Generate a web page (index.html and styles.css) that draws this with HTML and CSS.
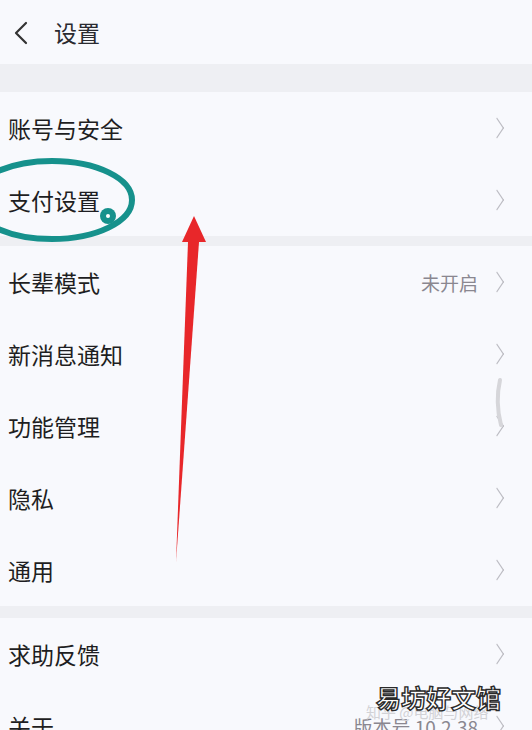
FILE: index.html
```html
<!DOCTYPE html>
<html lang="zh">
<head>
    <meta charset="UTF-8">
    <meta name="viewport" content="width=device-width, initial-scale=1.0">
    <title>设置</title>
    <link rel="stylesheet" href="styles.css">
</head>
<body>
    <div class="tela">
        <header class="topo">
            <svg class="voltar" width="16" height="24" viewBox="0 0 16 24">
                <path d="M13 2 L3 12 L13 22" fill="none" stroke="#333" stroke-width="2.2" stroke-linecap="round" stroke-linejoin="round"/>
            </svg>
            <span class="titulo">设置</span>
        </header>

        <div class="faixa faixa-topo"></div>

        <div class="grupo">
            <div class="linha-item"><span>账号与安全</span><span class="seta"></span></div>
            <div class="linha-item"><span>支付设置</span><span class="seta"></span></div>
        </div>

        <div class="faixa faixa-fina"></div>

        <div class="grupo">
            <div class="linha-item"><span>长辈模式</span><span class="valor">未开启</span><span class="seta"></span></div>
            <div class="linha-item"><span>新消息通知</span><span class="seta"></span></div>
            <div class="linha-item"><span>功能管理</span><span class="seta"></span></div>
            <div class="linha-item"><span>隐私</span><span class="seta"></span></div>
            <div class="linha-item"><span>通用</span><span class="seta"></span></div>
        </div>

        <div class="faixa faixa-media"></div>

        <div class="grupo">
            <div class="linha-item"><span>求助反馈</span><span class="seta"></span></div>
            <div class="linha-item"><span>关于</span><span class="valor">版本号 10.2.38</span><span class="seta"></span></div>
        </div>

        <!-- anotacoes desenhadas por cima da captura -->
        <svg class="anotacao" width="532" height="730" viewBox="0 0 532 730">
            <ellipse cx="52" cy="200" rx="80" ry="39" fill="none" stroke="#16918c" stroke-width="6"/>
            <circle cx="108" cy="216" r="8" fill="#16918c"/>
            <circle cx="108" cy="216" r="2" fill="#ffffff"/>
            <path d="M176 562 L188 242 L199 242 Z" fill="#e8272a"/>
            <path d="M194 216 L182 242 L206 242 Z" fill="#e8272a"/>
            <path d="M500 380 Q495 402 501 425" fill="none" stroke="#d6d6da" stroke-width="4" stroke-linecap="round"/>
        </svg>

        <div class="marca">
            <span class="marca-fundo">知乎 @电脑与网络</span>
            <span class="marca-texto">易坊好文馆</span>
        </div>
    </div>
</body>
</html>
```

FILE: styles.css
```css
body {
    margin: 0;
    background: #f7f8fc;
    font-family: "Noto Sans CJK SC", "Noto Sans", sans-serif;
    color: #1e1e22;
}
.tela {
    width: 532px;
    height: 730px;
    overflow: hidden;
    position: relative;
}
.topo {
    height: 64px;
    display: flex;
    align-items: center;
    padding-left: 13px;
    background: #f8f9fd;
}
.voltar {
    margin-top: 1px;
}
.titulo {
    margin-left: 25px;
    font-size: 23px;
    color: #2a2a30;
}
.faixa {
    background: #eeeff3;
}
.faixa-topo {
    height: 28px;
}
.faixa-fina {
    height: 10px;
}
.faixa-media {
    height: 12px;
}
.grupo {
    background: #f8f9fd;
}
.linha-item {
    height: 72px;
    display: flex;
    align-items: center;
    padding: 0 27px 0 8px;
    font-size: 23px;
}
.linha-item span:first-child {
    flex: 1;
}
.grupo:nth-of-type(1) .linha-item {
    height: 73px;
}
.valor {
    font-size: 19px;
    color: #8a8790;
    margin-right: 14px;
}
.seta {
    width: 9px;
    height: 9px;
    margin-right: 3px;
    border-top: 1.5px solid #bcbcc2;
    border-right: 1.5px solid #bcbcc2;
    transform: scaleY(1.5) rotate(45deg);
}
.anotacao {
    position: absolute;
    left: 0;
    top: 0;
}
.marca {
    position: absolute;
    left: 360px;
    top: 680px;
    width: 160px;
    height: 40px;
}
.marca-fundo {
    position: absolute;
    left: 6px;
    top: 21px;
    font-size: 15px;
    color: #d2d2d6;
    white-space: nowrap;
}
.marca-texto {
    position: absolute;
    left: 16px;
    top: -1px;
    font-size: 25px;
    font-weight: bold;
    color: #ffffff;
    -webkit-text-stroke: 1.4px #2a2a2a;
}
```
